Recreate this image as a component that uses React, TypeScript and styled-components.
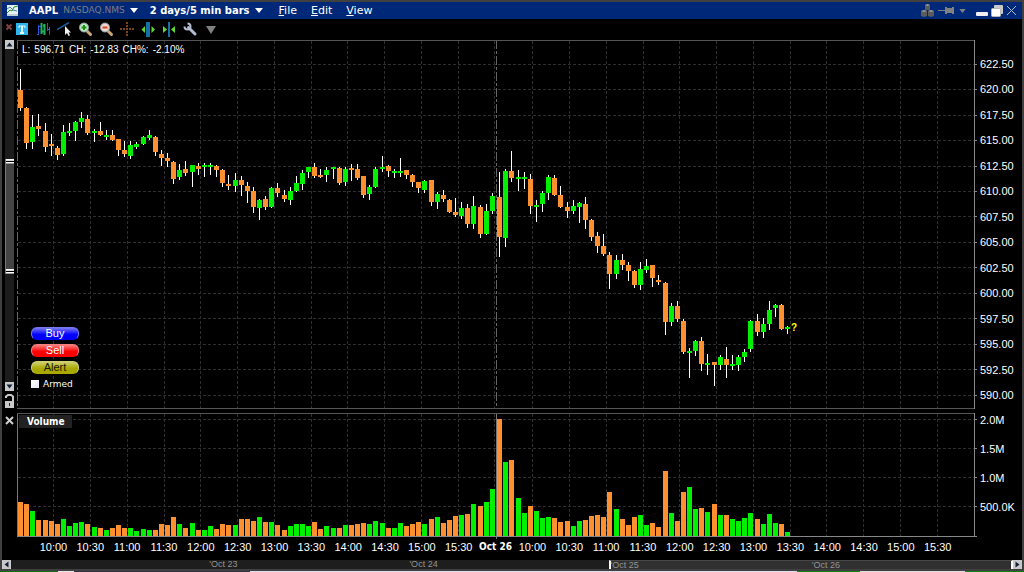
import React from "react";
import styled, { createGlobalStyle, css } from "styled-components";

const UP = "#00f000";
const DOWN = "#ff9030";

type Direction = "u" | "d";
/* x centre, body top, body bottom, wick top, wick bottom, direction, volume top */
type Bar = [number, number, number, number, number, Direction, number];

const BARS: Bar[] = [
  [20, 90, 108, 69, 111, "d", 502],
  [26, 108, 143, 107, 149, "d", 504],
  [32, 127, 142, 115, 149, "u", 511],
  [38, 126, 129, 114, 136, "d", 520],
  [45, 131, 147, 123, 152, "d", 520],
  [51, 144, 146, 134, 156, "d", 521],
  [57, 148, 155, 146, 160, "d", 524],
  [63, 132, 154, 125, 156, "u", 519],
  [69, 131, 133, 123, 136, "u", 526],
  [75, 122, 131, 121, 141, "u", 523],
  [81, 118, 122, 112, 128, "u", 522],
  [87, 119, 133, 115, 135, "d", 524],
  [94, 131, 133, 129, 142, "u", 527],
  [100, 131, 135, 122, 136, "d", 528],
  [106, 135, 137, 130, 140, "u", 530],
  [112, 135, 140, 130, 141, "d", 528],
  [118, 139, 150, 139, 156, "d", 525],
  [124, 150, 154, 141, 157, "d", 528],
  [130, 145, 156, 141, 159, "u", 528],
  [136, 144, 147, 142, 149, "u", 531],
  [143, 137, 144, 136, 145, "u", 529],
  [149, 135, 138, 130, 140, "u", 530],
  [155, 137, 152, 136, 156, "d", 530],
  [161, 154, 158, 150, 166, "d", 524],
  [167, 158, 161, 153, 167, "d", 525],
  [173, 162, 179, 161, 184, "d", 517],
  [179, 170, 177, 164, 180, "u", 524],
  [185, 169, 173, 161, 176, "d", 528],
  [192, 165, 172, 165, 187, "u", 523],
  [198, 166, 169, 163, 175, "d", 530],
  [204, 165, 167, 163, 177, "u", 530],
  [210, 165, 167, 163, 175, "u", 526],
  [216, 166, 170, 165, 177, "d", 529],
  [222, 170, 183, 169, 187, "d", 524],
  [228, 184, 186, 175, 190, "d", 525],
  [235, 180, 186, 173, 192, "u", 525],
  [241, 180, 185, 176, 196, "d", 519],
  [247, 186, 191, 182, 203, "d", 519],
  [253, 191, 207, 187, 213, "d", 521],
  [259, 200, 208, 199, 220, "u", 517],
  [265, 199, 207, 196, 210, "d", 522],
  [271, 188, 207, 187, 208, "u", 522],
  [277, 188, 193, 183, 197, "d", 525],
  [284, 195, 199, 190, 202, "d", 530],
  [290, 191, 200, 187, 205, "u", 526],
  [296, 183, 191, 176, 192, "u", 524],
  [302, 173, 184, 170, 190, "u", 524],
  [308, 167, 172, 167, 178, "u", 526],
  [314, 167, 176, 163, 178, "d", 522],
  [320, 175, 177, 169, 178, "d", 529],
  [326, 170, 175, 167, 182, "u", 526],
  [333, 167, 169, 167, 179, "u", 528],
  [339, 168, 183, 167, 185, "d", 528],
  [345, 169, 182, 167, 186, "u", 525],
  [351, 168, 170, 164, 181, "d", 525],
  [357, 169, 178, 164, 180, "d", 524],
  [363, 176, 195, 176, 198, "d", 523],
  [369, 187, 194, 185, 200, "u", 524],
  [375, 169, 187, 167, 188, "u", 521],
  [382, 167, 169, 156, 172, "u", 523],
  [388, 166, 171, 165, 177, "d", 528],
  [394, 171, 173, 169, 178, "u", 528],
  [400, 171, 173, 158, 177, "u", 523],
  [406, 170, 175, 170, 179, "d", 526],
  [412, 175, 182, 174, 187, "d", 524],
  [418, 182, 188, 182, 193, "d", 522],
  [424, 181, 190, 180, 193, "u", 524],
  [431, 180, 202, 180, 206, "d", 519],
  [437, 194, 202, 192, 209, "u", 517],
  [443, 195, 199, 190, 202, "d", 523],
  [449, 200, 212, 199, 213, "d", 520],
  [455, 212, 215, 198, 217, "d", 516],
  [461, 208, 216, 202, 219, "u", 515],
  [467, 208, 224, 204, 228, "d", 514],
  [473, 206, 224, 196, 229, "u", 504],
  [480, 207, 234, 205, 238, "d", 506],
  [486, 211, 234, 204, 235, "u", 502],
  [492, 196, 211, 193, 214, "u", 489],
  [499, 197, 237, 172, 257, "d", 419],
  [505, 171, 238, 169, 247, "u", 462],
  [511, 171, 178, 151, 182, "d", 460],
  [518, 177, 179, 170, 191, "u", 498],
  [524, 177, 179, 172, 189, "u", 513],
  [530, 179, 206, 174, 214, "d", 506],
  [536, 205, 207, 200, 222, "u", 511],
  [542, 193, 204, 191, 212, "u", 518],
  [548, 177, 193, 175, 200, "u", 517],
  [554, 178, 195, 175, 196, "d", 518],
  [560, 195, 207, 186, 208, "d", 522],
  [567, 207, 211, 202, 218, "d", 521],
  [573, 206, 211, 200, 214, "u", 526],
  [579, 203, 207, 202, 223, "u", 521],
  [585, 204, 220, 197, 229, "d", 520],
  [591, 220, 237, 219, 241, "d", 516],
  [597, 236, 246, 232, 253, "d", 515],
  [603, 246, 254, 234, 256, "d", 517],
  [609, 255, 274, 252, 289, "d", 492],
  [616, 260, 274, 255, 279, "u", 509],
  [622, 260, 265, 254, 270, "d", 519],
  [628, 265, 271, 262, 281, "d", 525],
  [634, 271, 285, 270, 288, "d", 517],
  [640, 269, 285, 262, 290, "u", 515],
  [646, 266, 270, 259, 273, "u", 525],
  [652, 265, 278, 265, 287, "d", 523],
  [658, 280, 282, 275, 285, "d", 527],
  [665, 283, 322, 282, 335, "d", 471],
  [671, 306, 322, 303, 326, "u", 513],
  [677, 306, 319, 301, 322, "d", 521],
  [683, 321, 352, 319, 354, "d", 492],
  [689, 351, 353, 348, 378, "u", 487],
  [695, 341, 351, 340, 356, "u", 509],
  [701, 341, 364, 337, 371, "d", 508],
  [707, 363, 365, 354, 375, "u", 512],
  [714, 362, 365, 362, 386, "d", 504],
  [720, 357, 365, 355, 370, "u", 515],
  [726, 359, 365, 347, 378, "d", 515],
  [732, 364, 366, 355, 370, "u", 519],
  [738, 357, 365, 355, 371, "u", 521],
  [744, 352, 357, 349, 362, "u", 518],
  [750, 321, 349, 320, 352, "u", 513],
  [757, 321, 332, 314, 336, "d", 519],
  [763, 324, 332, 318, 338, "u", 524],
  [769, 310, 324, 301, 330, "u", 514],
  [775, 305, 308, 304, 317, "u", 523],
  [781, 305, 329, 304, 330, "d", 524],
  [787, 327, 329, 326, 334, "u", 532],
];

const GRID_X = [
  53, 90, 127, 164, 200, 237, 274, 311, 347, 384, 421, 458, 494, 532, 569, 606,
  643, 679, 716, 753, 790, 826, 863, 900, 937,
];
const PRICE_Y = [64, 89, 115, 140, 166, 191, 216, 242, 267, 293, 318, 344, 369, 395];
const VOLUME_Y = [419, 448, 477, 506];

const PRICES = [
  "622.50", "620.00", "617.50", "615.00", "612.50", "610.00", "607.50",
  "605.00", "602.50", "600.00", "597.50", "595.00", "592.50", "590.00",
];
const VOLUMES = ["2.0M", "1.5M", "1.0M", "500.0K"];
const TIMES = [
  "10:00", "10:30", "11:00", "11:30", "12:00", "12:30", "13:00", "13:30",
  "14:00", "14:30", "15:00", "15:30", "Oct 26", "10:00", "10:30", "11:00",
  "11:30", "12:00", "12:30", "13:00", "13:30", "14:00", "14:30", "15:00", "15:30",
];

const Global = createGlobalStyle`
  * { box-sizing: border-box; }
  body { margin: 0; background: #000; }
  button, input { margin: 0; padding: 0; border: 0; font: inherit; color: inherit; }
  button { background: none; line-height: 1; }
`;

const sans = `"Liberation Sans", Arial, sans-serif`;
const wide = `"DejaVu Sans", Verdana, sans-serif`;
const narrow = `"DejaVu Sans Condensed", Tahoma, sans-serif`;

const Window = styled.div`
  display: flex;
  flex-direction: column;
  height: 100vh;
  min-height: 480px;
  color: #fff;
  font: 11px/12px ${sans};
`;

const Frame = styled.div`
  flex: 1;
  min-height: 0;
  display: flex;
  flex-direction: column;
  background: #000;
  border: 2px solid #404040;
`;

const TitleBar = styled.header`
  display: flex;
  align-items: center;
  flex: none;
  height: 17px;
  padding: 0 4px 0 5px;
  background: #002878;
  font-family: ${wide};
`;

const Picker = styled.button<{ $gap: number }>`
  display: flex;
  align-items: center;
  gap: 5px;
  margin-left: ${(p) => p.$gap}px;
  font-weight: bold;
  font-size: 10px;
  white-space: nowrap;
`;

const Exchange = styled.span`
  color: #7c7c84;
  font-weight: normal;
  font-size: 9px;
`;

const Menus = styled.nav`
  display: flex;
  gap: 14px;
  margin-left: 16px;
`;

const MenuButton = styled.button`
  &::first-letter {
    text-decoration: underline;
  }
`;

const WindowTools = styled.div`
  display: flex;
  align-items: center;
  margin-left: auto;
`;

const ToolGroup = styled.div`
  display: flex;
  align-items: center;
  margin-right: 6px;
`;

const ToolIcon = styled.button<{ $width: number }>`
  display: flex;
  align-items: center;
  justify-content: center;
  width: ${(p) => p.$width}px;
  height: 16px;
`;

const Toolbar = styled.div`
  display: flex;
  align-items: center;
  flex: none;
  height: 21px;
  padding-left: 3px;
`;

const Workspace = styled.main`
  flex: 1;
  min-height: 0;
  display: grid;
  grid-template-columns: 15px minmax(0, 1fr) 45px;
  grid-template-rows: minmax(0, 1fr) 4px 126px 21px;
`;

const Cell = styled.div<{ $row: number; $column: number }>`
  position: relative;
  grid-row: ${(p) => p.$row};
  grid-column: ${(p) => p.$column};
  min-width: 0;
  min-height: 0;
`;

const Rail = styled(Cell)`
  display: flex;
  flex-direction: column;
  padding: 0 3px;
`;

const Plot = styled.svg`
  display: block;
  width: 100%;
  height: 100%;
`;

const ArrowButton = styled.button`
  flex: none;
  display: flex;
  align-items: center;
  justify-content: center;
  width: 9px;
  height: 9px;
  background: #c8c8c8;
`;

const Track = styled.div`
  flex: 1;
  display: flex;
  flex-direction: column;
  background: #1c1c1c;
`;

const Space = styled.div<{ $grow: number }>`
  flex: ${(p) => p.$grow} 1 0;
`;

const handle = css`
  content: "";
  display: block;
  height: 5px;
  background: linear-gradient(#fff 1px, #ddd 1px 2px, #000 2px 3px, #fff 3px 4px, #999 4px);
`;

const Thumb = styled.div`
  flex: 115 1 0;
  display: flex;
  flex-direction: column;
  justify-content: space-between;
  background: #444;
  border-left: 1px solid #777;
  &::before { ${handle} }
  &::after { ${handle} }
`;

const LockButton = styled.button`
  flex: none;
  height: 18px;
  padding-top: 3px;
`;

const ClosePanel = styled.button`
  height: 16px;
`;

const Quote = styled.div`
  position: absolute;
  top: 4px;
  left: 5px;
  display: flex;
  gap: 4px;
  font-size: 10px;
  white-space: nowrap;
`;

const OrderPad = styled.div`
  position: absolute;
  left: 14px;
  bottom: 19px;
  display: flex;
  flex-direction: column;
  gap: 4px;
`;

const OrderButton = styled.button<{ $top: string; $base: string; $ink?: string }>`
  width: 48px;
  height: 13px;
  border-radius: 6px;
  background: linear-gradient(${(p) => p.$top}, ${(p) => p.$base} 60%);
  border: 1px solid ${(p) => p.$top};
  border-bottom-color: ${(p) => p.$base};
  color: ${(p) => p.$ink ?? "#fff"};
  line-height: 11px;
`;

const Armed = styled.label`
  display: flex;
  align-items: center;
  gap: 4px;
  font: 9px/12px ${wide};
`;

const Tick = styled.input`
  appearance: none;
  width: 8px;
  height: 8px;
  background: linear-gradient(135deg, #fff, #e4e4f4);
`;

const PanelTitle = styled.h2`
  position: absolute;
  top: 2px;
  left: 2px;
  width: 53px;
  height: 13px;
  margin: 0;
  padding-left: 8px;
  background: #222;
  font: bold 10px/13px ${narrow};
`;

const PriceAxis = styled(Cell)`
  display: flex;
  flex-direction: column;
  padding: 11px 0 1px 3px;
`;

const PriceLabel = styled.span`
  flex: 1;
  display: flex;
  align-items: center;
`;

const VolumeAxis = styled(Cell)`
  display: flex;
  flex-direction: column;
  justify-content: space-between;
  padding: 1px 0 26px 3px;
`;

const TimeAxis = styled(Cell)`
  display: flex;
  padding: 2px 21px 0 18px;
`;

const TimeLabel = styled.span<{ $day: boolean }>`
  flex: 1 1 0;
  display: flex;
  justify-content: center;
  min-width: 0;
  white-space: nowrap;
  ${(p) => p.$day && css`font: bold 10px/12px ${narrow};`}
`;

const History = styled.div`
  flex: none;
  display: flex;
  height: 9px;
  background: #1e1e1e;
`;

const Past = styled.div`
  flex: 600 1 0;
  display: flex;
`;

const Selected = styled.div`
  flex: 402 1 0;
  display: flex;
  background: #303030;
  border-top: 1px solid #484848;
  border-left: 2px solid #fff;
  border-right: 2px solid #fff;
`;

const DayMark = styled.span<{ $grow: number }>`
  flex: ${(p) => p.$grow} 1 0;
  color: #949494;
  font: 9px/9px ${sans};
  white-space: nowrap;
`;

const Desktop = styled.div`
  flex: none;
  height: 1px;
  background: linear-gradient(
    90deg,
    #107010 58px, #e8e8e8 58px 74px, #334 74px 250px, #dde 250px 797px,
    #108010 797px 860px, #ddd 860px 965px, #108010 965px
  );
`;

const Caret = ({ color = "#fff", size = 8 }: { color?: string; size?: number }) => (
  <svg width={size} height={size - 3} viewBox="0 0 8 5" aria-hidden>
    <path d="M0 0H8L4 5Z" fill={color} />
  </svg>
);

const Arrow = ({ turn }: { turn: number }) => (
  <svg width="7" height="7" viewBox="0 0 7 7" aria-hidden>
    <path d="M0.5 5.5L3.5 1.5L6.5 5.5Z" fill="#102038" transform={`rotate(${turn} 3.5 3.5)`} />
  </svg>
);

const Glyph = ({ children, w = 15, h = 15 }: { children: React.ReactNode; w?: number; h?: number }) => (
  <svg width={w} height={h} viewBox={`0 0 ${w} ${h}`} fill="none" aria-hidden>
    {children}
  </svg>
);

const Magnifier = ({ lens, color, plus }: { lens: string; color: string; plus?: boolean }) => (
  <Glyph>
    <path d="M9 9L12.500 12.500" stroke="#c8a878" strokeWidth="3" strokeLinecap="round" />
    <circle cx="6" cy="5.5" r="4.5" fill={lens} stroke="#8ca0ac" />
    <path d={plus ? "M3.500 5.500H8.500M6 3V8" : "M3.500 5.500H8.500"} stroke={color} strokeWidth="2" />
  </Glyph>
);

const TOOLS: { name: string; icon: React.ReactNode }[] = [
  {
    name: "Text note",
    icon: (
      <Glyph>
        <rect x="1" y="1" width="12" height="12" fill="#30b4ec" />
        <path d="M4 6V4H10V6" stroke="#e8f8ff" />
        <path d="M7 4V11M5 11H9" stroke="#e8f8ff" strokeWidth="2" />
      </Glyph>
    ),
  },
  {
    name: "Bar style",
    icon: (
      <Glyph>
        <path d="M2.5 3V13M1 12.5H2.5M2.5 4.5H5" stroke="#2858e0" />
        <path d="M5.500 1V12M5.500 9.500H8M8.500 2V13M7 3.500H8.500" stroke="#20b060" strokeWidth="2" />
        <path d="M11.500 1V9M11.500 7.500H13.500M13.500 5V13" stroke="#2858e0" />
      </Glyph>
    ),
  },
  {
    name: "Trend line",
    icon: (
      <Glyph>
        <path d="M0 7.500L12 0.500" stroke="#1c60a0" strokeWidth="1.500" />
        <path d="M8 4V13L10 11L11.5 14L13 13.3L11.6 10.5H14Z" fill="#f0f0f0" />
      </Glyph>
    ),
  },
  { name: "Zoom in", icon: <Magnifier lens="#c0e8c0" color="#189018" plus /> },
  { name: "Zoom out", icon: <Magnifier lens="#f0d8d0" color="#d84020" /> },
  {
    name: "Crosshair",
    icon: (
      <Glyph>
        <path d="M0 7H5M6 7H8M9 7H14M7 0V5M7 9V14" stroke="#7c4414" strokeWidth="2" strokeDasharray="2 1" />
      </Glyph>
    ),
  },
  {
    name: "Widen bars",
    icon: (
      <Glyph>
        <rect x="5" y="0" width="4" height="15" fill="#1470a8" />
        <path d="M4 4V11L0.500 7.500ZM10.500 4V11L14 7.500Z" fill="#60d830" />
      </Glyph>
    ),
  },
  {
    name: "Narrow bars",
    icon: (
      <Glyph>
        <rect x="6" y="0" width="2" height="15" fill="#1470a8" />
        <path d="M1 4V11L5 7.500ZM13 4V11L9 7.500Z" fill="#60d830" />
      </Glyph>
    ),
  },
  {
    name: "Settings",
    icon: (
      <Glyph>
        <path d="M5.500 5.500L12 12" stroke="#b4bcd0" strokeWidth="3" strokeLinecap="round" />
        <path d="M4.500 1.500A3 3 0 1 1 1.500 4.500" stroke="#b4bcd0" strokeWidth="2" />
      </Glyph>
    ),
  },
  {
    name: "More tools",
    icon: (
      <Glyph>
        <path d="M2 4H12L7 12Z" fill="#808080" />
      </Glyph>
    ),
  },
];

const GridLines = ({ rows, top, bottom }: { rows: number[]; top: number; bottom: number }) => (
  <g stroke="#2e2e2e" strokeDasharray="3 2">
    {rows.map((y) => (
      <path key={y} d={`M18 ${y + 0.5}H974`} />
    ))}
    {GRID_X.map((x) => (
      <path key={x} d={`M${x + 0.5} ${top}V${bottom}`} />
    ))}
  </g>
);

const AxisTicks = ({ rows }: { rows: number[] }) => (
  <path d={rows.map((y) => `M975 ${y + 0.5}H977`).join("")} stroke="#888" />
);

const fillOf = (d: Direction) => (d === "u" ? UP : DOWN);

const PricePlot = () => (
  <Plot viewBox="17 40 960 369" preserveAspectRatio="none" shapeRendering="crispEdges" role="img" aria-label="AAPL price, five minute bars">
    <GridLines rows={PRICE_Y} top={41} bottom={408} />
    <path d="M17.500 40V409M496.500 40V409" stroke="#666" strokeDasharray="9 2 3 2" />
    <path d="M17 40.500H975M17 408.500H975" stroke="#555" />
    <path d="M974.500 40V409" stroke="#888" />
    <AxisTicks rows={PRICE_Y} />
    {BARS.map(([x, top, bottom, high, low, d]) => (
      <g key={x}>
        <rect x={x} y={high} width="1" height={low - high} fill="#fff" />
        <rect x={x - 2} y={top} width="5" height={bottom - top} fill={fillOf(d)} />
      </g>
    ))}
    <text x="791" y="331" fill="#ffff00" fontSize="10" fontWeight="bold">?</text>
  </Plot>
);

const VolumePlot = () => (
  <Plot viewBox="17 413 960 126" preserveAspectRatio="none" shapeRendering="crispEdges" role="img" aria-label="Volume">
    <GridLines rows={VOLUME_Y} top={414} bottom={536} />
    <path d="M496.500 413V539M17.500 413V536" stroke="#777" />
    <path d="M17 413.500H975" stroke="#555" />
    <path d="M974.500 413V536M17 536.500H977" stroke="#888" />
    <AxisTicks rows={VOLUME_Y} />
    {BARS.map(([x, , , , , d, top]) => (
      <rect key={x} x={x - 2} y={top} width="5" height={536 - top} fill={fillOf(d)} />
    ))}
  </Plot>
);

export default function App() {
  return (
    <Window>
      <Global />
      <Frame>
        <TitleBar>
          <Glyph w={11} h={11}>
            <rect width="11" height="11" fill="#e8f0f0" />
            <path d="M0 8L3 5L5 6L7 2L11 1" stroke="#209020" />
            <path d="M0 4L3 2L6 5L10 6" stroke="#4080b0" />
            <path d="M0 10H11" stroke="#90a8b8" />
          </Glyph>
          <Picker $gap={11}>
            <span>AAPL</span>
            <Exchange>NASDAQ.NMS</Exchange>
            <Caret />
          </Picker>
          <Picker $gap={12}>
            2 days/5 min bars
            <Caret />
          </Picker>
          <Menus>
            <MenuButton>File</MenuButton>
            <MenuButton>Edit</MenuButton>
            <MenuButton>View</MenuButton>
          </Menus>
          <WindowTools>
            <ToolGroup>
              <ToolIcon $width={18} aria-label="Group">
                <Glyph w={13} h={13}>
                  <path d="M4 1L6.500 0L9 1V6H4ZM0 7L3 6L6 7V12L3 13L0 12ZM7 7L10 6L13 7V12L10 13L7 12Z" fill="#5c5c5c" />
                  <path d="M4 1L6.500 0L9 1L6.500 2ZM0 7L3 6L6 7L3 8ZM7 7L10 6L13 7L10 8Z" fill="#989898" />
                </Glyph>
              </ToolIcon>
              <ToolIcon $width={20} aria-label="Pin">
                <Glyph w={16} h={9}>
                  <path d="M0 4.500H7" stroke="#808080" />
                  <path d="M7 1H9V2H14V1H16V8H14V7H9V8H7Z" fill="#808080" />
                </Glyph>
              </ToolIcon>
              <ToolIcon $width={12} aria-label="Pin options">
                <Caret color="#808080" size={7} />
              </ToolIcon>
            </ToolGroup>
            <ToolIcon $width={16} aria-label="Minimize">
              <Glyph w={12} h={13}>
                <rect y="8" width="12" height="4" rx="1" fill="#f0f0f0" />
              </Glyph>
            </ToolIcon>
            <ToolIcon $width={14} aria-label="Restore">
              <Glyph w={12} h={12}>
                <rect x="3" width="9" height="9" rx="1" fill="#c8c8c8" />
                <rect x="0.500" y="3.500" width="9" height="8" rx="1" fill="#fff" stroke="#b8b8b8" />
              </Glyph>
            </ToolIcon>
            <ToolIcon $width={14} aria-label="Close">
              <Glyph w={9} h={9}>
                <path d="M0 0L9 9M9 0L0 9" stroke="#b0b8c8" />
              </Glyph>
            </ToolIcon>
          </WindowTools>
        </TitleBar>

        <Toolbar>
          <ToolIcon $width={7} aria-label="Close toolbar">
            <Glyph w={6} h={13}>
              <path d="M0.500 1.500L5.500 6.500M5.500 1.500L0.500 6.500" stroke="#804040" strokeWidth="2" />
            </Glyph>
          </ToolIcon>
          {TOOLS.map((tool) => (
            <ToolIcon key={tool.name} $width={21} aria-label={tool.name}>
              {tool.icon}
            </ToolIcon>
          ))}
        </Toolbar>

        <Workspace>
          <Rail $row={1} $column={1}>
            <ArrowButton aria-label="Scroll up"><Arrow turn={0} /></ArrowButton>
            <Track>
              <Space $grow={110} />
              <Thumb />
              <Space $grow={108} />
            </Track>
            <ArrowButton aria-label="Scroll down"><Arrow turn={180} /></ArrowButton>
            <LockButton aria-label="Unlock scale">
              <Glyph w={9} h={15}>
                <path d="M1 4V2.500L3 1H6L8 2.500V7" stroke="#c8c8c8" strokeWidth="2" />
                <rect y="7" width="9" height="7" fill="#c8c8c8" />
                <rect x="4" y="9" width="1" height="3" fill="#222" />
              </Glyph>
            </LockButton>
          </Rail>
          <Cell $row={1} $column={2}>
            <PricePlot />
            <Quote>
              <span>L:</span>
              <span>596.71</span>
              <span>CH:</span>
              <span>-12.83</span>
              <span>CH%:</span>
              <span>-2.10%</span>
            </Quote>
            <OrderPad>
              <OrderButton $top="#7878f0" $base="#0000ff">Buy</OrderButton>
              <OrderButton $top="#f88080" $base="#ff0000">Sell</OrderButton>
              <OrderButton $top="#d0d070" $base="#a8a800" $ink="#201800">Alert</OrderButton>
              <Armed>
                <Tick type="checkbox" />
                Armed
              </Armed>
            </OrderPad>
          </Cell>
          <PriceAxis $row={1} $column={3}>
            {PRICES.map((p) => (
              <PriceLabel key={p}>{p}</PriceLabel>
            ))}
          </PriceAxis>

          <Rail $row={3} $column={1}>
            <ClosePanel aria-label="Close volume">
              <Glyph w={9} h={9}>
                <path d="M1 1L8 8M8 1L1 8" stroke="#d0d0d0" strokeWidth="2" />
              </Glyph>
            </ClosePanel>
          </Rail>
          <Cell $row={3} $column={2}>
            <VolumePlot />
            <PanelTitle>Volume</PanelTitle>
          </Cell>
          <VolumeAxis $row={3} $column={3}>
            {VOLUMES.map((v) => (
              <span key={v}>{v}</span>
            ))}
          </VolumeAxis>
          <TimeAxis $row={4} $column={2}>
            {TIMES.map((t, i) => (
              <TimeLabel key={i} $day={t.startsWith("Oct")}>{t}</TimeLabel>
            ))}
          </TimeAxis>
        </Workspace>

        <History>
          <ArrowButton aria-label="Earlier"><Arrow turn={-90} /></ArrowButton>
          <Past>
            <Space $grow={199} />
            <DayMark $grow={201}>'Oct 23</DayMark>
            <DayMark $grow={200}>'Oct 24</DayMark>
          </Past>
          <Selected>
            <DayMark $grow={200}>'Oct 25</DayMark>
            <DayMark $grow={198}>'Oct 26</DayMark>
          </Selected>
          <ArrowButton aria-label="Later"><Arrow turn={90} /></ArrowButton>
        </History>
      </Frame>
      <Desktop />
    </Window>
  );
}
